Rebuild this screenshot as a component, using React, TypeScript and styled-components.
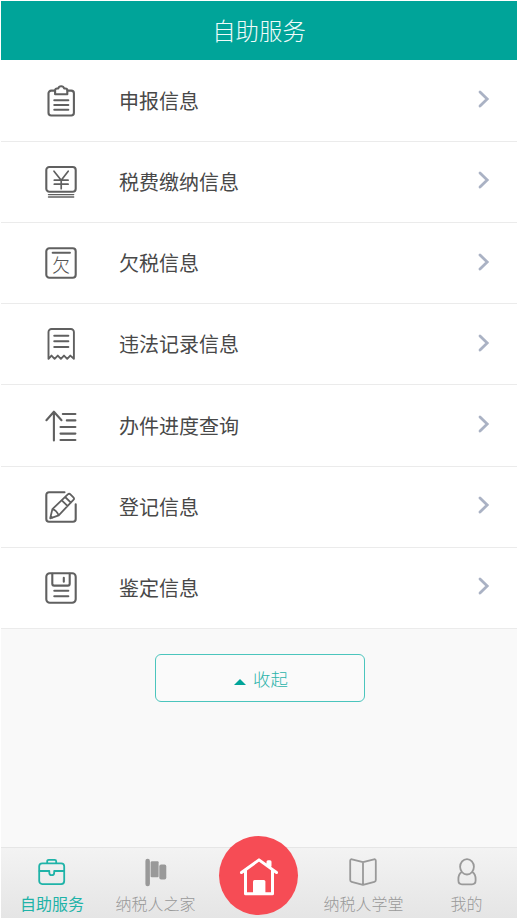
import React from "react";
import styled, { createGlobalStyle, css } from "styled-components";

const GlobalStyle = createGlobalStyle`
  * { box-sizing: border-box; }
  body {
    margin: 0;
    background: #fff;
    font-family: "Noto Sans CJK SC", sans-serif;
    font-weight: 300;
  }
`;

const Screen = styled.div`
  width: 518px;
  height: 920px;
  padding: 1px 1px 2px;
  display: flex;
  flex-direction: column;
  overflow: hidden;
  background: #fff;
`;

const Header = styled.header`
  height: 59px;
  flex: none;
  display: flex;
  align-items: center;
  justify-content: center;
  padding-bottom: 2px;
  background: #00a499;
  color: #f0fbfa;
  font-size: 23.4px;
  line-height: 30px;
`;

const List = styled.ul`
  margin: 0;
  padding: 0.7px 0 0;
  list-style: none;
  background: #fff;
`;

const Row = styled.li`
  height: 81.2px;
  display: flex;
  align-items: center;
  padding: 0 27px 0 43px;
  border-bottom: 1px solid #ebebeb;
`;

const RowIcon = styled.svg`
  width: 34px;
  height: 34px;
  flex: none;
  fill: none;
  stroke: #606060;
  stroke-width: 2.1;
  stroke-linecap: round;
  stroke-linejoin: round;
`;

const IconGlyph = styled.text`
  font-size: 18px;
  fill: #555;
  stroke: none;
`;

const RowLabel = styled.span`
  flex: 1;
  margin-left: 41px;
  color: #484848;
  font-size: 20px;
  font-weight: 400;
  line-height: 28px;
`;

const Chevron = styled.svg`
  width: 12px;
  height: 20px;
  margin-bottom: 3px;
  fill: none;
  stroke: #aab2c4;
  stroke-width: 2.8;
  stroke-linecap: round;
`;

const Content = styled.main`
  flex: 1;
  display: flex;
  flex-direction: column;
  background: #f9f9f9;
`;

const CollapseButton = styled.button`
  width: 210px;
  height: 48px;
  margin: 25px 0 0 154px;
  padding: 2px 0 0 2px;
  display: flex;
  align-items: center;
  justify-content: center;
  gap: 7px;
  border: 1.5px solid #4bc5bd;
  border-radius: 6px;
  background: #fafafa;
  color: #2bb3aa;
  font: inherit;
  font-size: 17.4px;
  line-height: 24px;
`;

const Triangle = styled.span`
  margin-top: 5px;
  border: solid transparent;
  border-width: 0 6.5px 6.5px;
  border-bottom-color: #00a499;
`;

const TabBar = styled.nav`
  height: 71.5px;
  flex: none;
  display: grid;
  grid-template-columns: 102px 105px 103px 105px 101px;
  border-top: 1px solid #e6e6e6;
  background: linear-gradient(#f3f3f3, #e5e5e5);
`;

const Tab = styled.div<{ $active?: boolean }>`
  display: flex;
  flex-direction: column;
  align-items: center;
  padding-top: 9px;
  color: #999;
  font-size: 16px;
  line-height: 24px;
  white-space: nowrap;
  gap: 4px;
  ${(p) => p.$active && css`color: #1fb3a8; font-weight: 400;`}
`;

const TabIcon = styled.svg`
  width: 30px;
  height: 30px;
  flex: none;
  fill: none;
  stroke: currentColor;
  stroke-width: 1.8;
  stroke-linecap: round;
  stroke-linejoin: round;
`;

const HomeButton = styled.div`
  width: 79px;
  height: 79px;
  margin: -11.5px 0 0 11px;
  border-radius: 50%;
  background: #f64c55;
  display: flex;
  align-items: center;
  justify-content: center;
`;

const HomeIcon = styled.svg`
  width: 40px;
  height: 40px;
  fill: none;
  stroke: #fff;
  stroke-width: 3;
  stroke-linecap: round;
  stroke-linejoin: round;
`;

const services = [
  {
    label: "申报信息",
    icon: (
      <>
        <path d="M10.8 6.6H7.2a2.7 2.7 0 0 0-2.7 2.7v19.5a2.7 2.7 0 0 0 2.7 2.7h20a2.7 2.7 0 0 0 2.7-2.7V9.3a2.7 2.7 0 0 0-2.7-2.7h-3.6" />
        <path d="M11.1 10.2V6.3c0-1.2.8-1.8 1.9-1.8h1.2c.5-1.6 1.5-2.2 3-2.2s2.5.6 3 2.2h1.2c1.1 0 1.9.6 1.9 1.8v3.9z" />
        <path d="M10.3 16.2h14M10.3 21h14M10.3 25.8h14" />
      </>
    ),
  },
  {
    label: "税费缴纳信息",
    icon: (
      <>
        <rect x="2.3" y="2" width="29.4" height="24.7" rx="3" />
        <path d="M10 6.2l7.2 9 7-9M17.2 15.2v8.5M10.3 15.2h13.8M10.3 19.2h13.8" strokeWidth="1.7" />
        <path d="M4.5 29.6h25.2M4.5 32h25.2" strokeWidth="1.4" />
      </>
    ),
  },
  {
    label: "欠税信息",
    icon: (
      <>
        <rect x="2.3" y="2.3" width="29.4" height="29.4" rx="3" />
        <path d="M8.7 6.8h17.2" />
        <IconGlyph x="7.9" y="26.4">欠</IconGlyph>
      </>
    ),
  },
  {
    label: "违法记录信息",
    icon: (
      <>
        <path d="M4.5 31.8V5a3 3 0 0 1 3-3h19.4a3 3 0 0 1 3 3v26.8l-3.6-3.2-3.1 3.2-3.2-3.2-3.1 3.2-3.1-3.2-3.2 3.2-3.1-3.2z" strokeWidth="1.9" />
        <path d="M10.3 8.7h14M10.3 14.3h14M10.3 20h14" />
      </>
    ),
  },
  {
    label: "办件进度查询",
    icon: (
      <>
        <path d="M9.9 31.5V2.8M2.4 11.2l7.5-8.4 7.6 8.4" />
        <path d="M18.8 5h12.6M22.8 11.4h8.6M16.5 18h14.9M16.5 24.6h14.9M16.5 31h14.9" />
      </>
    ),
  },
  {
    label: "登记信息",
    icon: (
      <>
        <path d="M20.5 2.3H5a2.7 2.7 0 0 0-2.7 2.7v24A2.7 2.7 0 0 0 5 31.7h24a2.7 2.7 0 0 0 2.7-2.7V14.2" />
        <path d="M6.2 28.3l2.2-9.2L23.8 4.3c.9-.8 1.8-.8 2.6 0l3 3c.9.9.9 1.8 0 2.6L14.7 25.3zM8.4 19.1c2.7.6 4.8 2.8 6.3 6.2M21.1 7l5.8 5.7M17.8 10.3l5.6 5.5M6.8 26.2l1.6 1.7" strokeWidth="1.8" />
      </>
    ),
  },
  {
    label: "鉴定信息",
    icon: (
      <>
        <rect x="2.3" y="2.3" width="29.4" height="29.4" rx="3.5" />
        <path d="M8.3 2.8v10a1.8 1.8 0 0 0 1.8 1.8h13.8a1.8 1.8 0 0 0 1.8-1.8v-10M19.8 6.8v4M10.3 19.8h14M10.3 25.3h14" />
      </>
    ),
  },
];

export default function App() {
  return (
    <>
      <GlobalStyle />
      <Screen>
        <Header>自助服务</Header>
        <Content>
          <List>
            {services.map((service) => (
              <Row key={service.label}>
                <RowIcon viewBox="0 0 34 34">{service.icon}</RowIcon>
                <RowLabel>{service.label}</RowLabel>
                <Chevron viewBox="0 0 12 20">
                  <path d="M2 3l7.2 7L2 17" />
                </Chevron>
              </Row>
            ))}
          </List>
          <CollapseButton>
            <Triangle />
            收起
          </CollapseButton>
        </Content>
        <TabBar>
          <Tab $active>
            <TabIcon viewBox="0 0 30 30">
              <rect x="2.2" y="6.3" width="25" height="20.8" rx="3" />
              <path d="M10.2 6V4.3c0-1 .6-1.5 1.5-1.5h6c.9 0 1.5.5 1.5 1.5V6M2.5 14h9.8M17.2 14h9.7M12.3 14v1.7a2.4 2.4 0 0 0 4.9 0V14" />
            </TabIcon>
            自助服务
          </Tab>
          <Tab>
            <TabIcon viewBox="0 0 30 30">
              <g fill="currentColor" stroke="none">
                <rect x="4.4" y="1.7" width="4.5" height="27.5" rx="2.2" />
                <path d="M9.6 4.9l1-.6h6q1 0 1 1v14q0 1-1 1h-6l-1-.6z" />
                <rect x="18.3" y="7.6" width="7" height="15" rx="1.8" />
              </g>
            </TabIcon>
            纳税人之家
          </Tab>
          <HomeButton>
            <HomeIcon viewBox="0 0 40 40">
              <path d="M2.5 16.5L20 3.9l17.5 12.6M6.5 14.2v23.5h27V14.2M29 8.2V5.7h2V10" />
              <path d="M14 38.2V25.4q0-1.5 1.5-1.5h9.4q1.5 0 1.5 1.5v12.8z" fill="#fff" stroke="none" />
            </HomeIcon>
          </HomeButton>
          <Tab>
            <TabIcon viewBox="0 0 30 30">
              <path d="M14 5.2L3 2.3Q1.2 2 1.2 3.9v19.2q0 1.5 1.4 1.8L14 27.8l11.4-2.9q1.4-.3 1.4-1.8V3.9q0-1.9-1.8-1.6zM14 5.2v22.6" />
            </TabIcon>
            纳税人学堂
          </Tab>
          <Tab>
            <TabIcon viewBox="0 0 30 30">
              <ellipse cx="15" cy="9.8" rx="6.9" ry="7.7" />
              <path d="M9.4 15.2C7.2 16.7 6.4 19 6.4 22v1.6c0 2.5 1.2 3.7 3.6 3.7h10c2.4 0 3.6-1.2 3.6-3.7V22c0-3-.8-5.3-3-6.8" />
            </TabIcon>
            我的
          </Tab>
        </TabBar>
      </Screen>
    </>
  );
}
